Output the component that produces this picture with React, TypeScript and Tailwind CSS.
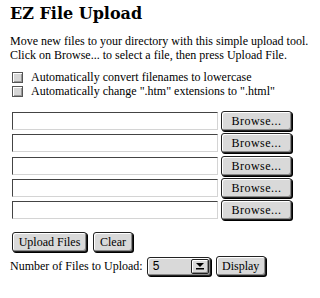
import React from "react";

const btn =
  "h-[20px] flex items-center justify-center rounded-[3px] border border-[#222] bg-[#d9d9d9] shadow-[inset_1px_1px_0_#fff,inset_-1px_-1px_0_#8a8a8a,1px_1px_0_#000] text-[12px] leading-none text-black font-['Liberation_Serif',serif]";

function FileRow() {
  return (
    <div className="flex items-center gap-[3px] h-[20px]">
      <input
        type="text"
        className="w-[206px] h-[18px] bg-white border border-t-[#444] border-l-[#444] border-b-[#d4d4d4] border-r-[#d4d4d4] outline-none"
      />
      <button className={`${btn} w-[71px] tracking-[0.5px]`}>Browse...</button>
    </div>
  );
}

export default function App() {
  const options = [
    "Automatically convert filenames to lowercase",
    'Automatically change ".htm" extensions to ".html"',
  ];

  return (
    <div className="w-[320px] h-[298px] bg-white pl-[10px] pt-[4px] text-black font-['Liberation_Serif',serif] text-[12px]">
      <h1 className="font-['DejaVu_Serif',serif] font-bold text-[16px] leading-[20px]">EZ File Upload</h1>

      <p className="mt-[10px] leading-[14px]">
        Move new files to your directory with this simple upload tool.
        <br />
        Click on Browse... to select a file, then press Upload File.
      </p>

      <div className="mt-[8px] flex flex-col pl-[2px]">
        {options.map((label) => (
          <label key={label} className="flex items-center gap-[8px] h-[14px] leading-[14px]">
            <span className="w-[11px] h-[11px] border border-[#555] bg-[#d6d6d6] shadow-[inset_1px_1px_0_#fff,inset_-1px_-1px_0_#999]" />
            <span>{label}</span>
          </label>
        ))}
      </div>

      <div className="mt-[13px] flex flex-col gap-[2.25px] pl-[2px]">
        {[0, 1, 2, 3, 4].map((i) => (
          <FileRow key={i} />
        ))}
      </div>

      <div className="mt-[12px] flex gap-[6px] pl-[2px]">
        <button className={`${btn} w-[75px]`}>Upload Files</button>
        <button className={`${btn} w-[40px]`}>Clear</button>
      </div>

      <div className="mt-[4px] flex items-center">
        <span className="leading-[14px]">Number of Files to Upload:</span>
        <div className="ml-[4px] w-[64px] h-[19px] flex items-center rounded-[3px] border border-[#222] bg-[#d9d9d9] shadow-[inset_1px_1px_0_#fff,inset_-1px_-1px_0_#8a8a8a,1px_1px_0_#000]">
          <span className="flex-1 pl-[5px] font-['Liberation_Sans',sans-serif] text-[12px] leading-none">5</span>
          <span className="w-[18px] h-[15px] mr-[1px] flex items-center justify-center border border-[#222] rounded-[2px] bg-[#d9d9d9] shadow-[inset_1px_1px_0_#fff,inset_-1px_-1px_0_#8a8a8a]">
            <svg width="10" height="8" viewBox="0 0 10 8">
              <path d="M1 1h8L5 5z" fill="#000" />
              <rect x="1" y="6" width="8" height="1.5" fill="#000" />
            </svg>
          </span>
        </div>
        <button className={`${btn} ml-[5px] w-[50px]`}>Display</button>
      </div>
    </div>
  );
}
